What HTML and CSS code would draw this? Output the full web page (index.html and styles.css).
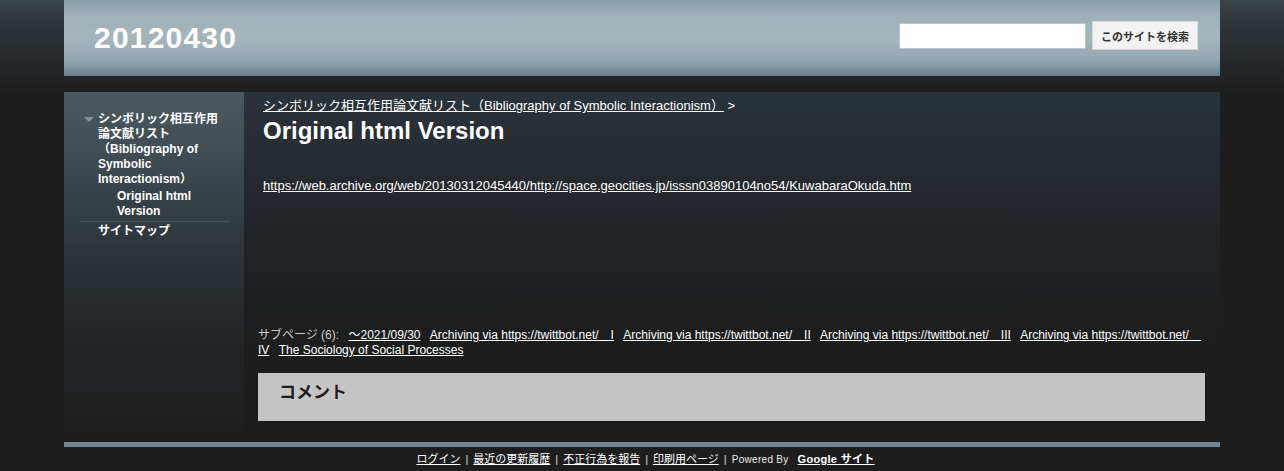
FILE: index.html
```html
<!DOCTYPE html>
<html lang="ja">
<head>
    <meta charset="UTF-8">
    <title>Original html Version - 20120430</title>
    <link rel="stylesheet" href="styles.css">
</head>
<body>
    <div class="header">
        <div class="site-title">20120430</div>
        <form class="search">
            <input type="text" class="search-box">
            <button type="button" class="search-btn">このサイトを検索</button>
        </form>
    </div>

    <div class="main">
        <div class="sidebar">
            <ul class="nav">
                <li class="nav-item open">
                    <span class="arrow"></span>
                    <a href="#">シンボリック相互作用論文献リスト（Bibliography of Symbolic Interactionism）</a>
                    <ul class="nav-sub">
                        <li><a href="#">Original html Version</a></li>
                    </ul>
                </li>
                <li class="nav-item divided">
                    <a href="#">サイトマップ</a>
                </li>
            </ul>
        </div>

        <div class="content">
            <div class="page-head">
                <div class="breadcrumb"><a href="#">シンボリック相互作用論文献リスト（Bibliography of Symbolic Interactionism）</a> &gt;</div>
                <h1 class="page-title">Original html Version</h1>
            </div>
            <div class="page-body">
                <a href="#">https://web.archive.org/web/20130312045440/http://space.geocities.jp/isssn03890104no54/KuwabaraOkuda.htm</a>
            </div>
            <div class="subpages">
                <span class="subpages-label">サブページ (6):</span>
                <a href="#">～2021/09/30</a>
                <a href="#">Archiving via https://twittbot.net/　I</a>
                <a href="#">Archiving via https://twittbot.net/　II</a>
                <a href="#">Archiving via https://twittbot.net/　III</a>
                <a href="#">Archiving via https://twittbot.net/　IV</a>
                <a href="#">The Sociology of Social Processes</a>
            </div>
            <div class="comments">
                <h2>コメント</h2>
            </div>
        </div>
    </div>

    <div class="footer-bar"></div>
    <div class="footer">
        <a href="#">ログイン</a><span class="sep">|</span><a href="#">最近の更新履歴</a><span class="sep">|</span><a href="#">不正行為を報告</a><span class="sep">|</span><a href="#">印刷用ページ</a><span class="sep">|</span><span class="powered">Powered By</span><a href="#" class="google">Google サイト</a>
    </div>
</body>
</html>
```

FILE: styles.css
```css
* {
    margin: 0;
    padding: 0;
    box-sizing: border-box;
}

body {
    font-family: "Liberation Sans", "Noto Sans CJK JP", sans-serif;
    color: #fff;
    background-color: #1d1d1d;
    background-image: linear-gradient(#3a4347 0, #2c3337 30px, #1d1d1d 95px);
    background-repeat: no-repeat;
}

a {
    color: #fff;
}

ul {
    list-style: none;
}

.header {
    width: 1156px;
    height: 76px;
    margin: 0 auto;
    padding: 0 22px 0 30px;
    display: flex;
    align-items: center;
    justify-content: space-between;
    background: linear-gradient(#8a9ea6 0%, #9fb1b8 20%, #a4b5bb 50%, #95a8b0 78%, #687f89 100%);
}

.site-title {
    font-size: 30px;
    font-weight: bold;
    letter-spacing: 1.2px;
    color: #fff;
}

.search {
    display: flex;
    align-items: center;
    gap: 6px;
    margin-bottom: 5px;
}

.search-box {
    width: 187px;
    height: 26px;
    border: 1px solid #b9c4c8;
    background: #fff;
}

.search-btn {
    width: 106px;
    height: 29px;
    border: 1px solid #d4d8da;
    background: #f2f2f2;
    font-family: "Liberation Sans", "Noto Sans CJK JP", sans-serif;
    font-size: 11px;
    font-weight: bold;
    color: #333;
}

.main {
    width: 1156px;
    margin: 16px auto 0;
    display: flex;
}

.sidebar {
    flex: 0 0 180px;
    padding: 20px 14px 0 15px;
    background: linear-gradient(#4b5a61 0%, #3b474d 25%, #2b3236 50%, #222426 75%, #1e1e1e 100%);
}

.nav-item {
    position: relative;
    padding: 0 7px 0 19px;
    font-size: 12px;
    font-weight: bold;
    line-height: 15px;
}

.nav-item a {
    text-decoration: none;
}

.arrow {
    position: absolute;
    left: 5px;
    top: 5px;
    border-left: 5px solid transparent;
    border-right: 5px solid transparent;
    border-top: 5px solid #87939a;
}

.nav-sub {
    margin-top: 2px;
    padding-left: 19px;
}

.nav-item.open {
    padding-bottom: 2px;
}

.nav-item.divided {
    border-top: 1px solid #465157;
    padding-top: 2px;
}

.content {
    flex: 1;
    padding: 6px 15px 11px 14px;
    background: linear-gradient(#2a333a 0%, #252a2f 25%, #1d1e1f 60%, #1c1c1c 100%);
}

.page-head {
    padding-left: 5px;
}

.breadcrumb {
    font-size: 13px;
    line-height: 16px;
}

.page-title {
    margin-top: 3px;
    font-size: 24px;
    line-height: 28px;
    font-weight: bold;
}

.page-body {
    padding-left: 5px;
    margin-top: 33px;
    height: 150px;
    font-size: 13px;
    line-height: 16px;
}

.subpages {
    font-size: 12px;
    line-height: 15px;
}

.subpages-label {
    color: #ccc;
}

.subpages a {
    margin-left: 6px;
}

.comments {
    margin-top: 15px;
    height: 48px;
    padding: 10px 21px;
    background: #c5c5c5;
}

.comments h2 {
    font-size: 17px;
    line-height: 20px;
    color: #1d1d1d;
}

.footer-bar {
    width: 1156px;
    height: 5px;
    margin: 10px auto 0;
    background: #6e8791;
}

.footer {
    padding: 5px 0 0 7px;
    text-align: center;
    font-size: 11px;
    line-height: 14px;
}

.footer .sep {
    margin: 0 5px;
    color: #ddd;
}

.powered {
    font-size: 10px;
    color: #eee;
    margin-right: 9px;
    letter-spacing: 0.3px;
}

.footer .google {
    font-weight: bold;
    font-size: 11px;
    letter-spacing: 0.3px;
}
```
